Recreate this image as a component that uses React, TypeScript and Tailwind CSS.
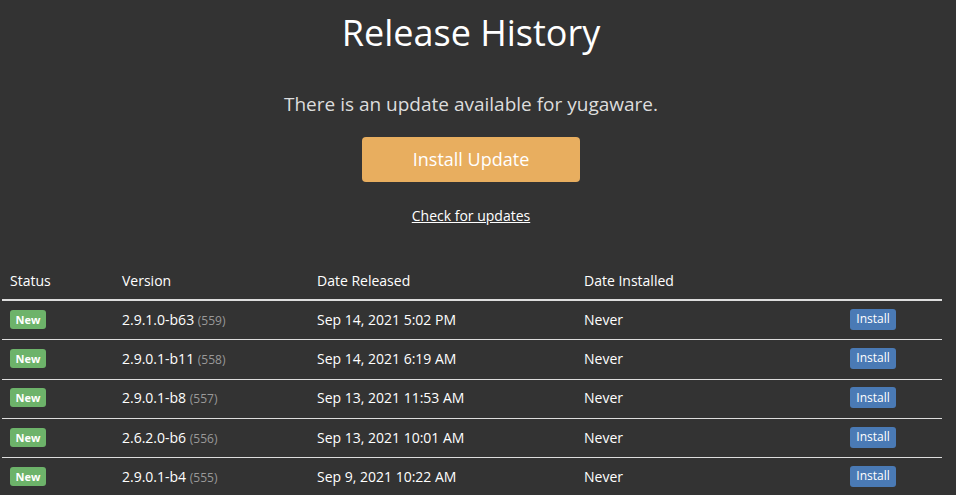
import React from "react";

const rows = [
  { v: "2.9.1.0-b63", n: "559", d: "Sep 14, 2021 5:02 PM" },
  { v: "2.9.0.1-b11", n: "558", d: "Sep 14, 2021 6:19 AM" },
  { v: "2.9.0.1-b8", n: "557", d: "Sep 13, 2021 11:53 AM" },
  { v: "2.6.2.0-b6", n: "556", d: "Sep 13, 2021 10:01 AM" },
  { v: "2.9.0.1-b4", n: "555", d: "Sep 9, 2021 10:22 AM" },
];

export default function App() {
  return (
    <div
      className="w-[956px] h-[495px] overflow-hidden bg-[#333333] text-white"
      style={{ fontFamily: '"Open Sans", sans-serif' }}
    >
      <div className="w-[942px] flex flex-col items-center">
        <h1 className="mt-[8px] text-[36px] leading-[50px] font-normal">Release History</h1>
        <p className="mt-[33px] text-[19px] leading-[26px] text-[#dddddd]">
          There is an update available for yugaware.
        </p>
        <button className="mt-[20px] w-[218px] h-[45px] rounded-[4px] bg-[#e8ae5f] text-[18px] text-white">
          Install Update
        </button>
        <a className="mt-[24px] text-[14px] leading-[20px] underline text-white">Check for updates</a>
      </div>
      <div className="ml-[2px] w-[940px] mt-[36px]">
        <div className="flex h-[39px] items-center border-b-2 border-[#dddddd] text-[14px]">
          <div className="w-[120px] pl-[8px]">Status</div>
          <div className="w-[195px]">Version</div>
          <div className="w-[267px]">Date Released</div>
          <div className="flex-1">Date Installed</div>
        </div>
        {rows.map((r, i) => (
          <div
            key={i}
            className="flex h-[39.3px] pb-[2px] items-center border-b border-[#dddddd] text-[14px]"
          >
            <div className="w-[120px] pl-[8px] flex">
              <span className="inline-flex items-center justify-center w-[36px] h-[19px] rounded-[3px] bg-[#6db36a] text-[11px] font-bold leading-none">
                New
              </span>
            </div>
            <div className="w-[195px]">
              {r.v} <span className="text-[12px] text-[#999999]">({r.n})</span>
            </div>
            <div className="w-[267px]">{r.d}</div>
            <div className="w-[266px]">Never</div>
            <div className="flex">
              <span className="inline-flex items-center justify-center w-[46px] h-[21px] rounded-[3px] bg-[#4a7ab5] text-[12px] leading-none">
                Install
              </span>
            </div>
          </div>
        ))}
      </div>
    </div>
  );
}
